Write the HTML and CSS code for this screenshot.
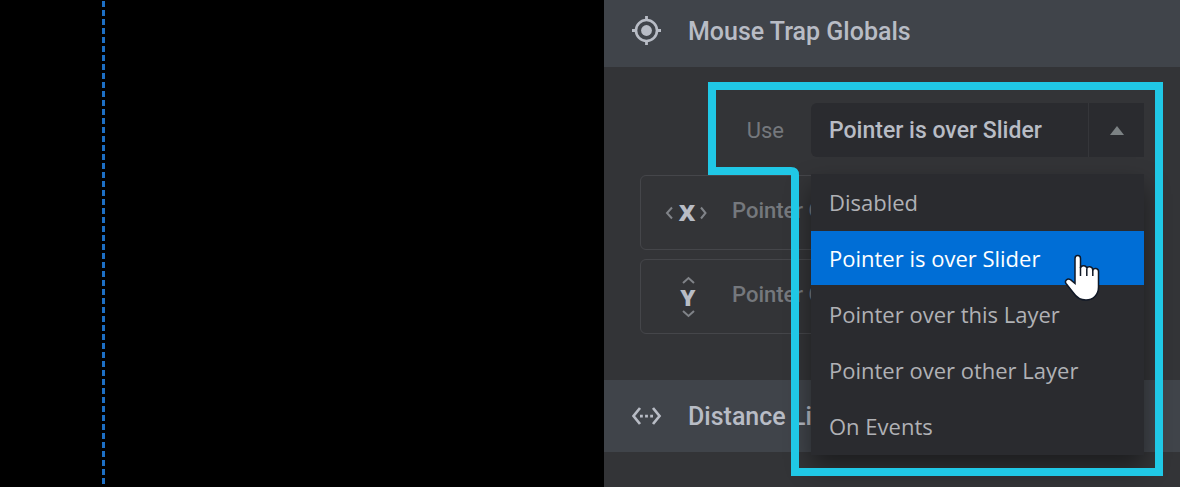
FILE: index.html
```html
<!DOCTYPE html>
<html lang="en">
<head>
<meta charset="utf-8">
<title>Mouse Trap Globals</title>
<link rel="stylesheet" href="styles.css">
</head>
<body>
<div class="editor">
  <main class="stage" aria-label="Slide canvas"><div class="guide"></div></main>
  <aside class="panel">
    <h2 class="panel-header">
      <svg class="header-icon" width="30" height="30" viewBox="0 0 30 30" aria-hidden="true">
        <circle cx="14.500" cy="14.500" r="10.500" fill="none" stroke="currentColor" stroke-width="2.600"/>
        <circle cx="14.500" cy="14.500" r="5.400" fill="currentColor"/>
        <path d="M14.500 0v4.500M14.500 24.500v4.500M0 14.500h4.500M24.500 14.500h4.500" stroke="currentColor" stroke-width="2.800"/>
      </svg>
      <span>Mouse Trap Globals</span>
    </h2>
    <div class="panel-body">
      <div class="use-row">
        <label class="use-label" for="use">Use</label>
        <div class="dropdown">
          <select class="dropdown-select" id="use">
            <option>Disabled</option>
            <option selected>Pointer is over Slider</option>
            <option>Pointer over this Layer</option>
            <option>Pointer over other Layer</option>
            <option>On Events</option>
          </select>
          <span class="dropdown-arrow" aria-hidden="true">
            <svg width="14" height="9" viewBox="0 0 14 9"><path d="M7 0l7 9H0z" fill="currentColor"/></svg>
          </span>
          <div class="menu">
            <button class="menu-item" type="button">Disabled</button>
            <button class="menu-item menu-item-active" type="button">Pointer is over Slider
              <svg class="pointer" width="37" height="48" viewBox="0 0 37 48" aria-hidden="true">
                <path d="M11 27V4.500C11 .6 16.500 .6 16.500 4.500V14C17 11 22.500 11 22.800 14.500C23.500 12 28.500 12 28.800 16C30 13.800 34.500 14 34.500 17.500V33C34.500 41 29 46 22 46C16 46 12.500 43.500 9.500 39L2 29.500C.2 26.500 3.500 24 6.500 25.700L11 29.500Z" fill="#fff" stroke="#101826" stroke-width="1.500"/>
                <path d="M16.500 13v9M22.800 14.500V22M28.800 16v6" stroke="#101826" stroke-width="1.500"/>
              </svg>
            </button>
            <button class="menu-item" type="button">Pointer over this Layer</button>
            <button class="menu-item" type="button">Pointer over other Layer</button>
            <button class="menu-item" type="button">On Events</button>
          </div>
        </div>
      </div>
      <div class="axis-list">
        <div class="axis-card">
          <svg class="axis-icon" width="44" height="46" viewBox="0 0 44 46" aria-hidden="true">
            <path class="axis-chevron" d="M7 17.500L2 23l5 5.500M36 17.500l4.500 5.500-4.500 5.500"/>
            <text class="axis-letter" x="22" y="31">X</text>
          </svg>
          <span>Pointer O</span>
        </div>
        <div class="axis-card">
          <svg class="axis-icon" width="44" height="46" viewBox="0 0 44 46" aria-hidden="true">
            <path class="axis-chevron" d="M18 9l5.500-5L29 9M18 37l5.500 5 5.500-5"/>
            <text class="axis-letter" x="23" y="32">Y</text>
          </svg>
          <span>Pointer O</span>
        </div>
      </div>
    </div>
    <h2 class="panel-header">
      <svg class="header-icon" width="30" height="30" viewBox="0 0 30 30" aria-hidden="true">
        <path d="M8 7L1.500 15l6.500 8M21 7L27.500 15l-6.500 8" fill="none" stroke="currentColor" stroke-width="2.700"/>
        <path d="M8 13.700h2.800v2.800H8zM13.100 13.700h2.800v2.800h-2.800zM18.200 13.700H21v2.800h-2.800z" fill="currentColor"/>
      </svg>
      <span>Distance Li</span>
    </h2>
    <svg class="callout" width="455" height="394" viewBox="0 0 455 394" aria-hidden="true">
      <path d="M4 4H451V390H87V93Q87 89 83 89H0M4 93V0" fill="none" stroke="#20c8e6" stroke-width="8"/>
    </svg>
  </aside>
</div>
</body>
</html>
```

FILE: styles.css
```css
* {
  box-sizing: border-box;
}

body {
  margin: 0;
  overflow: hidden;
  background: #000;
  color: #b8bcc5;
  font-family: Roboto, "Liberation Sans", sans-serif;
}

.editor {
  display: flex;
  min-height: 100vh;
}

.stage {
  flex: 1;
  padding-left: 102px;
  background: #000;
}

.guide {
  width: 3px;
  height: 100%;
  background: repeating-linear-gradient(#000 0 1px, #1d6fc4 1px 7px, #000 7px 9px);
}

.panel {
  position: relative;
  flex: 0 0 576px;
  background: #333437;
}

.panel-header {
  display: flex;
  align-items: center;
  gap: 26px;
  height: 72px;
  margin: 0;
  padding: 0 28px;
  background: #40444a;
  font-size: 25px;
  font-weight: 500;
}

.panel-header:first-child {
  margin-top: -5px;
}

.header-icon {
  flex: none;
}

.panel-body {
  display: flex;
  flex-direction: column;
  gap: 18px;
  padding: 36px 36px 46px;
}

.use-row {
  display: flex;
  align-items: center;
  justify-content: flex-end;
  gap: 27px;
}

.use-label {
  color: #75787d;
  font-size: 22px;
}

.dropdown {
  position: relative;
  width: 333px;
}

.dropdown-select {
  display: block;
  width: 100%;
  height: 54px;
  padding: 0 60px 0 18px;
  border: 0;
  border-radius: 6px 0 0 6px;
  outline: 0;
  appearance: none;
  background: #2a2b2f;
  color: #b8bcc5;
  font: 500 23px Roboto, "Liberation Sans", sans-serif;
}

.dropdown-arrow {
  position: absolute;
  top: 0;
  right: 0;
  display: flex;
  align-items: center;
  justify-content: center;
  width: 56px;
  height: 54px;
  border-left: 1px solid #35363a;
  color: #7c8284;
  pointer-events: none;
}

.menu {
  position: absolute;
  z-index: 1;
  top: 100%;
  left: 0;
  display: flex;
  flex-direction: column;
  gap: 2px;
  width: 100%;
  margin-top: 17px;
  padding: 1px 0 2px;
  background: #2a2b2f;
  box-shadow: 0 12px 24px rgba(0, 0, 0, 0.45);
}

.menu-item {
  position: relative;
  height: 54px;
  padding: 0 18px;
  border: 0;
  background: none;
  color: #b0b1b5;
  font: 22px "Open Sans", "Noto Sans", sans-serif;
  text-align: left;
}

.menu-item-active {
  background: #006ed6;
  color: #fff;
}

.pointer {
  position: absolute;
  top: 23px;
  right: 43px;
}

.axis-list {
  display: flex;
  flex-direction: column;
  gap: 9px;
}

.axis-card {
  display: flex;
  align-items: center;
  gap: 23px;
  height: 75px;
  padding: 0 24px 4px;
  border: 1px solid #45464a;
  border-radius: 6px;
  color: #75787d;
  font-size: 22px;
  font-weight: 500;
}

.axis-icon {
  flex: none;
  overflow: visible;
  margin-top: 4px;
}

.axis-chevron {
  fill: none;
  stroke: #808388;
  stroke-width: 2;
}

.axis-letter {
  fill: #b8bcc5;
  font: 900 23px "Noto Sans", "Open Sans", sans-serif;
  text-anchor: middle;
}

.callout {
  position: absolute;
  z-index: 2;
  top: 82px;
  right: 17px;
  pointer-events: none;
}
```
